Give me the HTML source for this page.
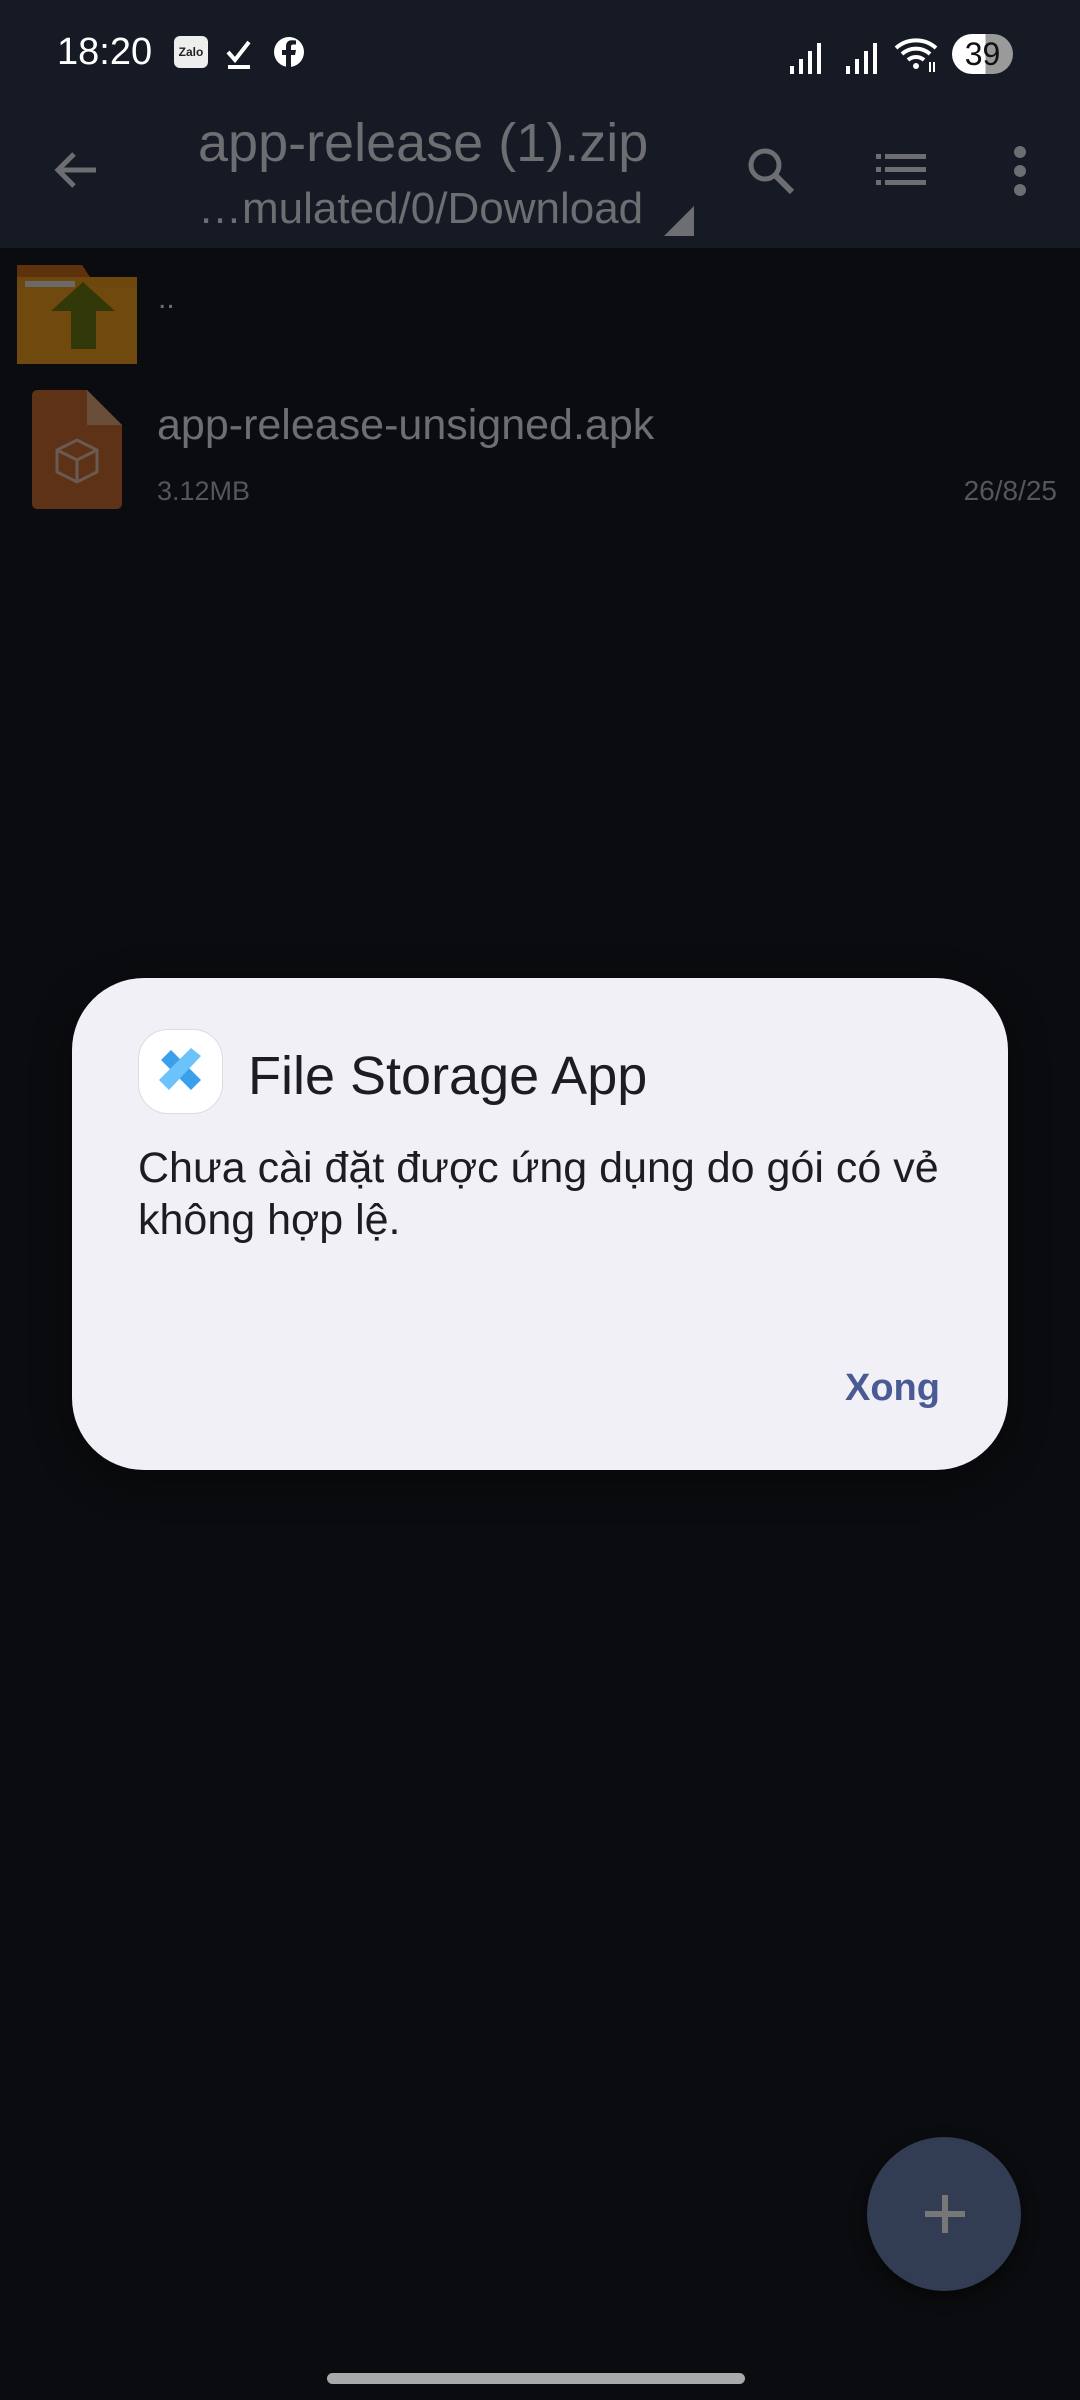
<!DOCTYPE html>
<html><head><meta charset="utf-8"><style>
*{margin:0;padding:0;box-sizing:border-box}
body{width:1080px;height:2400px;background:#0b0c0f;position:relative;overflow:hidden;font-family:"Liberation Sans",sans-serif}
.top{position:absolute;left:0;top:0;width:1080px;height:248px;background:#161a24}
.abs{position:absolute;white-space:nowrap}
</style></head><body>
<div class="top"></div>
<div class="abs" style="left:57px;top:31px;font-size:38px;color:#fff">18:20</div>
<div class="abs" style="left:174px;top:36px;width:34px;height:32px;background:#eee;border-radius:6px;font-size:12px;color:#222;text-align:center;line-height:32px;font-weight:bold">Zalo</div>
<svg class="abs" style="left:225px;top:38px" width="32" height="34" viewBox="0 0 32 34"><path d="M3 14l7 8 14-18" stroke="#fff" stroke-width="4" fill="none"/><rect x="3" y="27" width="22" height="4" fill="#fff"/></svg>
<svg class="abs" style="left:273px;top:36px" width="32" height="32" viewBox="0 0 32 32"><circle cx="16" cy="16" r="15" fill="#fff"/><path d="M18 32V19h4l1-5h-5v-3c0-1.5.5-2.5 2.5-2.5H23V4.5c-1-.2-2.5-.3-4-.3-4 0-6 2.3-6 6V14H9v5h4v13z" fill="#161a24"/></svg>
<svg class="abs" style="left:790px;top:42px" width="40" height="32" viewBox="0 0 40 32"><rect x="0" y="24" width="4" height="8" fill="#fff"/><rect x="9" y="17" width="4" height="15" fill="#fff"/><rect x="18" y="9" width="4" height="23" fill="#fff"/><rect x="27" y="1" width="4" height="31" fill="#fff"/></svg>
<svg class="abs" style="left:846px;top:42px" width="40" height="32" viewBox="0 0 40 32"><rect x="0" y="24" width="4" height="8" fill="#fff"/><rect x="9" y="17" width="4" height="15" fill="#fff"/><rect x="18" y="9" width="4" height="23" fill="#fff"/><rect x="27" y="1" width="4" height="31" fill="#fff"/></svg>
<svg class="abs" style="left:894px;top:36px" width="48" height="38" viewBox="0 0 48 38"><path d="M2 12a30 30 0 0 1 40 0M8 18a21 21 0 0 1 28 0M14 24a12 12 0 0 1 16 0" stroke="#fff" stroke-width="4" fill="none"/><circle cx="22" cy="30" r="3" fill="#fff"/><path d="M36 26v10M40 36v-10" stroke="#fff" stroke-width="2"/></svg>
<div class="abs" style="left:952px;top:34px;width:61px;height:40px;border-radius:20px;background:linear-gradient(90deg,#fff 0 55%,#9a9a9a 55%);font-size:32px;color:#111;text-align:center;line-height:40px">39</div>

<svg class="abs" style="left:52px;top:146px" width="48" height="48" viewBox="0 0 48 48"><path d="M44 24H8M22 8L6 24l16 16" stroke="#6d6e72" stroke-width="5" fill="none"/></svg>
<div class="abs" style="left:198px;top:112px;font-size:54px;color:#6d6e72">app-release (1).zip</div>
<div class="abs" style="left:198px;top:184px;font-size:44px;color:#6d6e72">…mulated/0/Download</div>
<svg class="abs" style="left:664px;top:206px" width="30" height="30"><path d="M30 0V30H0z" fill="#6d6e72"/></svg>
<svg class="abs" style="left:744px;top:144px" width="56" height="56" viewBox="0 0 56 56"><circle cx="21" cy="21" r="14" stroke="#6d6e72" stroke-width="5" fill="none"/><path d="M31 31l17 17" stroke="#6d6e72" stroke-width="6"/></svg>
<svg class="abs" style="left:876px;top:152px" width="52" height="36" viewBox="0 0 52 36"><g fill="#6d6e72"><rect x="0" y="2" width="5" height="5"/><rect x="9" y="2" width="41" height="5"/><rect x="0" y="15" width="5" height="5"/><rect x="9" y="15" width="41" height="5"/><rect x="0" y="28" width="5" height="5"/><rect x="9" y="28" width="41" height="5"/></g></svg>
<svg class="abs" style="left:1010px;top:146px" width="20" height="50"><g fill="#6d6e72"><circle cx="10" cy="6" r="6"/><circle cx="10" cy="25" r="6"/><circle cx="10" cy="44" r="6"/></g></svg>

<svg class="abs" style="left:17px;top:265px" width="120" height="99" viewBox="0 0 120 99"><path d="M0 0h65l8 12h47v87H0z" fill="#5e320c"/><rect x="0" y="12" width="120" height="87" fill="#6e470d"/><rect x="8" y="16" width="50" height="6" fill="#6a6a6a"/><rect x="0" y="22" width="120" height="77" fill="#70490e"/><path d="M66 17l32 29H79v38H54V46H34z" fill="#333808"/></svg>
<div class="abs" style="left:158px;top:282px;font-size:30px;color:#6d6e72">..</div>
<svg class="abs" style="left:32px;top:390px" width="90" height="119" viewBox="0 0 90 119"><path d="M5 0h50l35 35v79a5 5 0 0 1-5 5H5a5 5 0 0 1-5-5V5a5 5 0 0 1 5-5z" fill="#5e3216"/><path d="M55 0v35h35z" fill="#6a4e3c"/><path d="M25 60l20-10 20 10v22l-20 10-20-10zM25 60l20 10 20-10M45 70v22" stroke="#6a5a52" stroke-width="3" fill="none"/></svg>
<div class="abs" style="left:157px;top:401px;font-size:43px;color:#6d6e72">app-release-unsigned.apk</div>
<div class="abs" style="left:157px;top:476px;font-size:27px;color:#55565a">3.12MB</div>
<div class="abs" style="right:23px;top:475px;font-size:28px;color:#55565a">26/8/25</div>

<div class="abs" style="left:72px;top:978px;width:936px;height:492px;border-radius:72px;background:#f0f0f6;box-shadow:0 10px 40px rgba(0,0,0,.4)"></div>
<div class="abs" style="left:138px;top:1029px;width:85px;height:85px;border-radius:30px;background:#fff;border:1px solid #ddd"></div>
<svg class="abs" style="left:155px;top:1046px" width="52" height="52" viewBox="0 0 52 52"><path d="M6 14l10-10 30 30-10 10z" fill="#3aa0ec"/><path d="M46 10L36 2 4 34l10 10z" fill="#6cc2fb"/></svg>
<div class="abs" style="left:248px;top:1045px;font-size:54px;color:#1c1c22">File Storage App</div>
<div class="abs" style="left:138px;top:1142px;font-size:43px;line-height:52px;color:#1c1c22">Chưa cài đặt được ứng dụng do gói có vẻ<br>không hợp lệ.</div>
<div class="abs" style="left:845px;top:1367px;font-size:38px;color:#4a5a94;font-weight:bold">Xong</div>

<div class="abs" style="left:867px;top:2137px;width:154px;height:154px;border-radius:50%;background:#323c52;box-shadow:0 6px 16px rgba(0,0,0,.5)"></div>
<div class="abs" style="left:925px;top:2211px;width:40px;height:6px;background:#777"></div>
<div class="abs" style="left:942px;top:2195px;width:6px;height:38px;background:#777"></div>
<div class="abs" style="left:327px;top:2373px;width:418px;height:11px;border-radius:6px;background:#a8a9ab"></div>
</body></html>
